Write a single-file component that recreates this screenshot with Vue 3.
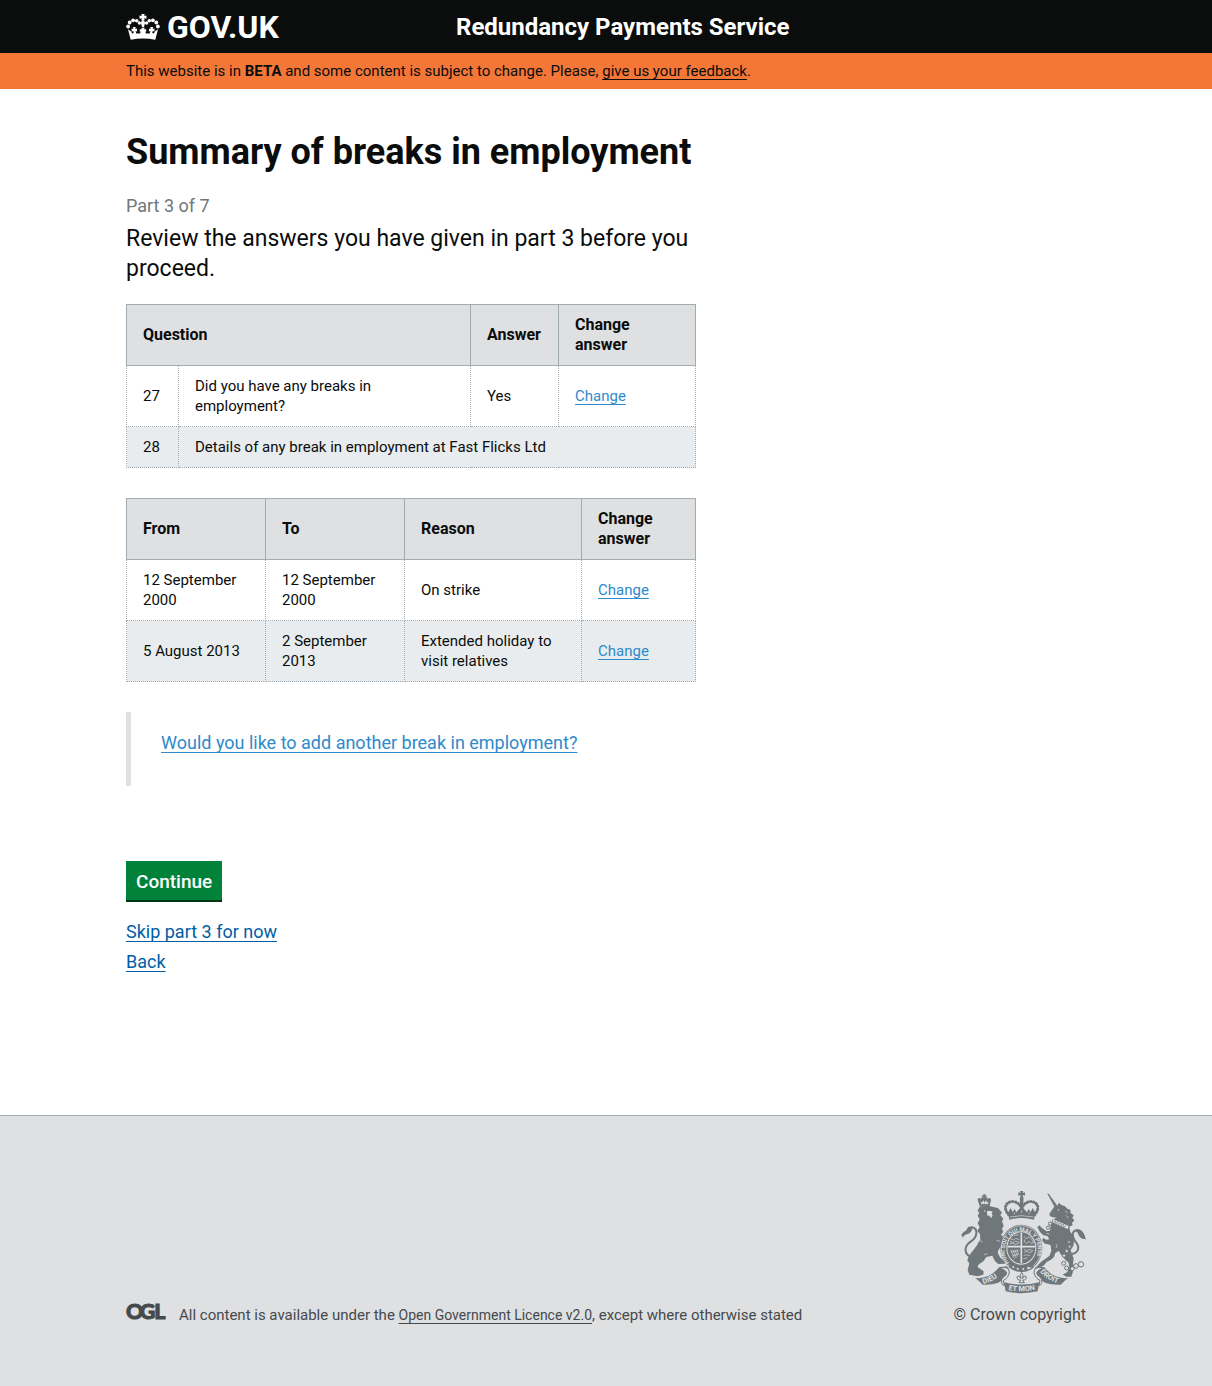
<script setup>
const answers = [
  { number: 27, question: 'Did you have any breaks in employment?', answer: 'Yes' },
  { number: 28, question: 'Details of any break in employment at Fast Flicks Ltd' },
]

const breaks = [
  { from: '12 September 2000', to: '12 September 2000', reason: 'On strike' },
  { from: '5 August 2013', to: '2 September 2013', reason: 'Extended holiday to visit relatives' },
]
</script>

<template>
  <div class="page">
    <header class="header">
      <div class="container header-inner">
        <a class="logo" href="#">
          <svg class="crown" viewBox="0 0 34 26" aria-hidden="true">
            <g fill="currentColor">
              <path d="M15.3 0h3.4l-.5 2 2.3-.5v3.2l-2.3-.5.5 2.4h-3.4l.5-2.4-2.3.5V1.500l2.3.5z" />
              <path d="M17 5.500l2.200 3-1.200 4.500h-2l-1.200-4.500z" />
              <circle cx="13.4" cy="9" r="1.7" />
              <circle cx="10.7" cy="6.7" r="1.8" />
              <circle cx="7.1" cy="6.3" r="1.9" />
              <circle cx="3.7" cy="8.5" r="1.9" />
              <circle cx="2.1" cy="12.5" r="1.9" />
              <circle cx="20.6" cy="9" r="1.7" />
              <circle cx="23.3" cy="6.7" r="1.8" />
              <circle cx="26.9" cy="6.3" r="1.9" />
              <circle cx="30.3" cy="8.5" r="1.9" />
              <circle cx="31.9" cy="12.5" r="1.9" />
              <path d="M2 15.200l3.200 2.200.8 2.200 1.800-.5-.5-2-1.700.4v-3l1.700.4-.4-1.900h2.800l-.4 1.900 1.800-.4v3l-1.600-.4.8 2.400 3.400.1 1.500-2-1.400.3v-2.900l1.900.5-.3-1.800h3.200l-.3 1.800 1.900-.5v2.900l-1.400-.3 1.500 2 3.400-.1.8-2.400-1.600.4v-3l1.800.4-.4-1.900h2.800l-.4 1.900 1.700-.4v3l-1.700-.4-.5 2 1.800.5.8-2.200 3.200-2.200-2.700 10.500q-12.300-2.400-24.600 0z" />
            </g>
          </svg>
          <span>GOV.UK</span>
        </a>
        <a class="service-name" href="#">Redundancy Payments Service</a>
      </div>
    </header>

    <div class="beta">
      <p class="container">
        This website is in <strong>BETA</strong> and some content is subject to change. Please,
        <a href="#">give us your feedback</a>.
      </p>
    </div>

    <main class="container">
      <div class="content">
        <h1>Summary of breaks in employment</h1>
        <p class="part">Part 3 of 7</p>
        <p class="lead">Review the answers you have given in part 3 before you proceed.</p>

        <table>
          <colgroup>
            <col class="col-number" />
            <col class="col-question" />
            <col class="col-answer" />
            <col />
          </colgroup>
          <thead>
            <tr>
              <th scope="col" colspan="2">Question</th>
              <th scope="col">Answer</th>
              <th scope="col" class="narrow">Change answer</th>
            </tr>
          </thead>
          <tbody>
            <tr v-for="row in answers" :key="row.number">
              <td>{{ row.number }}</td>
              <td :colspan="row.answer ? 1 : 3" :class="{ question: row.answer }">{{ row.question }}</td>
              <template v-if="row.answer">
                <td>{{ row.answer }}</td>
                <td><a href="#">Change</a></td>
              </template>
            </tr>
          </tbody>
        </table>

        <table>
          <colgroup>
            <col class="col-date" />
            <col class="col-date" />
            <col class="col-reason" />
            <col />
          </colgroup>
          <thead>
            <tr>
              <th scope="col">From</th>
              <th scope="col">To</th>
              <th scope="col">Reason</th>
              <th scope="col">Change answer</th>
            </tr>
          </thead>
          <tbody>
            <tr v-for="row in breaks" :key="row.from">
              <td>{{ row.from }}</td>
              <td>{{ row.to }}</td>
              <td>{{ row.reason }}</td>
              <td><a href="#">Change</a></td>
            </tr>
          </tbody>
        </table>

        <div class="inset"><a href="#">Would you like to add another break in employment?</a></div>

        <button type="button" class="continue">Continue</button>
        <ul class="actions">
          <li><a href="#">Skip part 3 for now</a></li>
          <li><a href="#">Back</a></li>
        </ul>
      </div>
    </main>

    <footer class="footer">
      <div class="container footer-inner">
        <div class="licence">
          <svg class="ogl" viewBox="0 0 42 18" role="img" aria-label="Open Government Licence">
            <text x="0 14 29" y="17">OGL</text>
          </svg>
          <p>
            All content is available under the
            <a href="#">Open Government Licence v2.0</a>, except where otherwise stated
          </p>
        </div>
        <a class="copyright" href="#">
          <svg class="crest" viewBox="33 30 375 312" aria-hidden="true">
            <defs>
              <path id="garter" d="M177 248A50 56 0 1 1 251 248" />
              <path id="ribbon-left" d="M100 312Q134 304 160 276" />
              <path id="ribbon-mid" d="M168 328Q214 340 262 328" />
              <path id="ribbon-right" d="M270 276Q294 304 336 313" />
            </defs>

            <!-- lion -->
            <g class="ink">
              <path d="M90 80l-7-20q-1-6 5-6l5 3 2-6 5 2v-2l-4-1v-4l4 1v-4h6v4l4-1v4l-4 1v2l5-2 2 6 5-3q6 1 5 7l-5 19q-14-5-28 0z" />
              <path d="M88 82Q104 72 126 80L144 84 156 98 151 105 160 116 156 124 161 138 156 146 160 156 153 164 165 177 170 192 162 207 153 199 146 209 143 218 151 233 166 241 166 251 145 252 135 244 127 227 109 231 100 244 85 254 83 261 101 274 100 284 82 289 58 284 53 270 58 250 52 242 56 228 68 213 80 197 91 178 90 163 82 152 89 142 83 130 89 118 83 107 88 98 83 92z" />
              <path class="line" d="M60 229C39 218 45 195 63 184C82 172 86 146 66 142C55 140 54 154 45 158" />
              <path d="M34 165Q39 155 49 154L54 141Q61 138 68 143Q65 158 53 162Q42 164 39 173z" />
            </g>
            <g class="paper">
              <path d="M92 64l4 4 4-7 4 7 4-7 4 7 4-4-2 9q-10-3-20 0z" />
              <path d="M110 94l10-2 8 3-3 6 3 6-5 7-5-7-8-1 2-5z" />
              <circle cx="104" cy="93" r="2" />
            </g>
            <path class="scratch" d="M112 221l-10 3M150 184l-10-3M90 182l8 4" />

            <!-- unicorn -->
            <g class="ink">
              <path d="M291 39l6 4 25 34-8 5z" />
              <path d="M298 102L310 84 316 76 322 78 326 68 334 75 344 78 352 86 362 90 361 98 371 106 367 113 373 122 366 128 368 136 358 140 360 154 368 166 372 184 370 198 362 210 366 222 371 236 369 250 371 262 368 278 364 290 350 290 338 284 352 276 358 262 356 248 344 238 332 222 326 213 316 219 312 231 302 240 290 246 282 256 268 264 262 257 272 247 284 238 298 228 304 212 302 196 294 193 284 191 276 181 280 173 288 179 298 178 292 168 280 166 270 156 262 142 268 136 276 144 290 154 300 152 302 138 306 120 320 113 308 112 300 108z" />
              <path class="line" d="M366 222C386 218 390 202 378 187C365 170 364 151 382 151C393 151 399 162 403 172" />
              <path d="M378 148Q394 146 400 160L408 178Q392 178 386 166Q384 156 378 155z" />
            </g>
            <g class="paper">
              <path d="M310 118l46 20-3 9-46-20z" />
              <circle cx="325" cy="90" r="2" />
            </g>
            <path class="teeth" d="M311 128l4-6 3 9 5-6 3 9 6-6 2 10 6-6 2 10 6-6" />
            <path class="scratch" d="M346 92l6 8M348 106l8 8M290 160l8 2M318 204l4-12" />
            <g class="chain">
              <circle cx="300" cy="131" r="5" />
              <circle cx="294" cy="143" r="5" />
              <circle cx="357" cy="186" r="4" />
              <circle cx="359" cy="200" r="4" />
              <circle cx="350" cy="213" r="5" />
              <circle cx="342" cy="227" r="5" />
              <circle cx="341" cy="250" r="6" />
              <circle cx="350" cy="264" r="6" />
              <circle cx="367" cy="266" r="6" />
              <circle cx="378" cy="258" r="7" />
              <circle cx="393" cy="253" r="8" />
            </g>

            <!-- central crown -->
            <g class="ink">
              <path d="M210 33h10l-2 6 7-2v10l-7-2 2 8h-10l2-8-7 2v-10l7 2z" />
              <circle cx="215" cy="57" r="6" />
              <path d="M210 60h10v30h-10z" />
              <path d="M174 98l8-14 6 12 6-9 5 10 9-10 7-9 7 9 9 10 5-10 6 9 6-12 8 14-4 21q-37-10-74 0z" />
            </g>
            <path class="beads" d="M176 104C154 79 174 62 192 65Q205 68 212 79M254 104C276 79 256 62 238 65Q225 68 218 79" />
            <path class="scratch" d="M180 111q35-8 70 0M193 97v6M215 91v8M237 97v6" />

            <!-- garter and shield -->
            <ellipse class="ink" cx="214" cy="204" rx="63" ry="70" />
            <ellipse class="rim" cx="214" cy="204" rx="60" ry="67" />
            <ellipse class="paper" cx="214" cy="204" rx="45" ry="50" />
            <ellipse class="ink" cx="214" cy="204" rx="42" ry="47" />
            <text class="motto"><textPath href="#garter">HONI SOIT QUI MAL Y PENSE</textPath></text>
            <path class="cross" d="M214 158v92M173 200h82" />
            <g class="scratch">
              <path d="M182 176l9 4 6-5 11 4M180 184l10 4 6-4 12 3M178 192l9-3 8 4 12-3M222 208l8 4 8-3 11 3M222 217l8-3 8 4 9-3M221 227l8-3 6 3 6-2M220 236l12-2" />
              <path d="M182 209l12 27M188 209l11 24M194 209l9 20M200 209l6 14M182 216l24-5M186 228l20-6M222 170l8 6 7-6 8 8 6 10-8 2-6-6-7 6-8-6 3-6M192 166l14-2" />
            </g>
            <path class="ink" d="M184 251q30 17 61 0l7 11q-16 15-38 14-22 0-38-14z" />
            <g class="paper">
              <circle cx="190" cy="261" r="3" />
              <circle cx="203" cy="266" r="3" />
              <circle cx="220" cy="267" r="3" />
              <path d="M232 260l13 3-12 6z" />
            </g>

            <!-- motto ribbon -->
            <path class="ink" d="M76 294q42 4 71-32l23-3q16 11-2 32-18 25-70 23l-9-9z" />
            <path class="ink" d="M354 294q-42 4-71-32l-23-3q-16 11 2 32 18 25 70 23l9-9z" />
            <path class="paper edge" d="M150 264q29-7 28 15-5 17-18 22l3 16q-11-3-8-19 3-7 13-13 5-9-4-14zM280 264q-29-7-28 15 5 17 18 22l-3 16q11-3 8-19-3-7-13-13-5-9 4-14z" />
            <path class="ink" d="M162 307q53 13 106 0l-5 27q-48 11-96 0z" />
            <text class="motto wide"><textPath href="#ribbon-left">DIEU</textPath></text>
            <text class="motto wide"><textPath href="#ribbon-mid" startOffset="50%" text-anchor="middle">ET MON</textPath></text>
            <text class="motto wide"><textPath href="#ribbon-right">DROIT</textPath></text>
            <path class="fleur" d="M215 277q8 9 2 19 5-11 11-7 5 7-5 11h-5l5 8h-16l5-8h-5q-10-4-5-11 6-4 11 7-6-10 2-19z" />
          </svg>
          <span>© Crown copyright</span>
        </a>
      </div>
    </footer>
  </div>
</template>

<style>
body {
  background: #dee0e2;
}
</style>

<style scoped>
.page {
  background: #fff;
  color: #0b0c0c;
  font-family: Roboto, "Liberation Sans", sans-serif;
  font-size: 16px;
  line-height: 20px;
}

.page * {
  box-sizing: border-box;
}

p,
h1,
ul {
  margin: 0;
  padding: 0;
}

a {
  text-decoration-thickness: 1px;
  text-underline-offset: 3px;
  text-decoration-skip-ink: none;
}

.container {
  max-width: 960px;
  margin: 0 auto;
}

/* Header */
.header {
  background: #0b0c0c;
}

.header-inner {
  display: flex;
  align-items: center;
  height: 53px;
}

.header a {
  color: #fff;
  font-weight: 700;
  text-decoration: none;
}

.logo {
  display: flex;
  align-items: center;
  gap: 7px;
  width: 330px;
  font-size: 32px;
}

.crown {
  width: 34px;
  height: 26px;
}

.service-name {
  font-size: 24px;
}

.beta {
  background: #f47738;
}

.beta p {
  padding: 8px 0;
  font-size: 15px;
}

.beta a {
  color: inherit;
}

/* Main column */
main {
  padding: 43px 0 138px;
}

.content {
  max-width: 570px;
}

h1 {
  margin-bottom: 21px;
  font-size: 36px;
  line-height: 40px;
}

.part {
  margin-bottom: 6px;
  color: #6f777b;
  font-size: 18px;
  line-height: 25px;
}

.lead {
  margin-bottom: 20px;
  font-size: 23px;
  line-height: 30px;
}

table {
  width: 100%;
  margin-bottom: 30px;
  border-collapse: collapse;
  table-layout: fixed;
}

th,
td {
  padding: 10px 16px;
  text-align: left;
  vertical-align: middle;
}

th {
  border: 1px solid #a1acb2;
  background: #dee0e2;
}

th.narrow {
  padding-right: 48px;
}

td {
  border: 1px dotted #a1acb2;
  font-size: 15px;
}

td.question {
  padding-right: 64px;
}

tbody tr:nth-child(even) {
  background: #e8ecee;
}

.col-number {
  width: 52px;
}

.col-question {
  width: 292px;
}

.col-answer {
  width: 88px;
}

.col-date {
  width: 139px;
}

.col-reason {
  width: 177px;
}

td a,
.inset a {
  color: #2e8aca;
}

.inset {
  margin-bottom: 75px;
  padding: 16px 0 28px 30px;
  border-left: 5px solid #dee0e2;
  font-size: 18px;
  line-height: 30px;
}

.continue {
  display: block;
  margin-bottom: 17px;
  padding: 6px 10px 4px;
  border: 0;
  background: #00823b;
  box-shadow: 0 2px 0 #003618;
  color: #fff;
  font: 500 19px/29px Roboto, "Liberation Sans", sans-serif;
}

.actions {
  list-style: none;
  font-size: 18px;
  line-height: 30px;
}

.actions a {
  color: #005ea5;
}

/* Footer */
.footer {
  border-top: 1px solid #a1acb2;
  background: #dee0e2;
  color: #454a4c;
}

.footer-inner {
  display: flex;
  align-items: flex-end;
  justify-content: space-between;
  padding: 74px 0 61px;
  font-size: 15px;
}

.footer a {
  color: inherit;
}

.licence {
  display: flex;
  align-items: flex-end;
  gap: 12px;
}

.licence a {
  font-size: 14px;
}

.ogl {
  width: 41px;
  height: 18px;
  margin-bottom: 5px;
  overflow: visible;
  fill: currentColor;
  stroke: currentColor;
  stroke-width: 1;
}

.ogl text {
  font: 900 22px Lato, sans-serif;
}

.footer .copyright {
  display: flex;
  flex-direction: column;
  align-items: flex-end;
  gap: 11px;
  font-size: 16px;
  text-decoration: none;
}

.crest {
  width: 125px;
  height: 104px;
}

.ink {
  fill: #6f777b;
}

.paper {
  fill: #dee0e2;
}

.edge {
  stroke: #6f777b;
  stroke-width: 3;
}

.fleur {
  fill: #dee0e2;
  stroke: #6f777b;
  stroke-width: 3;
}

.line {
  fill: none;
  stroke: #6f777b;
  stroke-width: 6;
}

.teeth {
  fill: none;
  stroke: #6f777b;
  stroke-width: 2;
}

.cross {
  fill: none;
  stroke: #dee0e2;
  stroke-width: 5;
}

.chain {
  fill: #dee0e2;
  stroke: #6f777b;
  stroke-width: 3;
}

.beads {
  fill: none;
  stroke: #6f777b;
  stroke-width: 9;
  stroke-linecap: round;
  stroke-dasharray: 1 8;
}

.rim,
.scratch {
  fill: none;
  stroke: #dee0e2;
  stroke-width: 2;
}

.motto {
  fill: #dee0e2;
  font: 700 17px Roboto, sans-serif;
}

.wide {
  font-size: 22px;
}
</style>
